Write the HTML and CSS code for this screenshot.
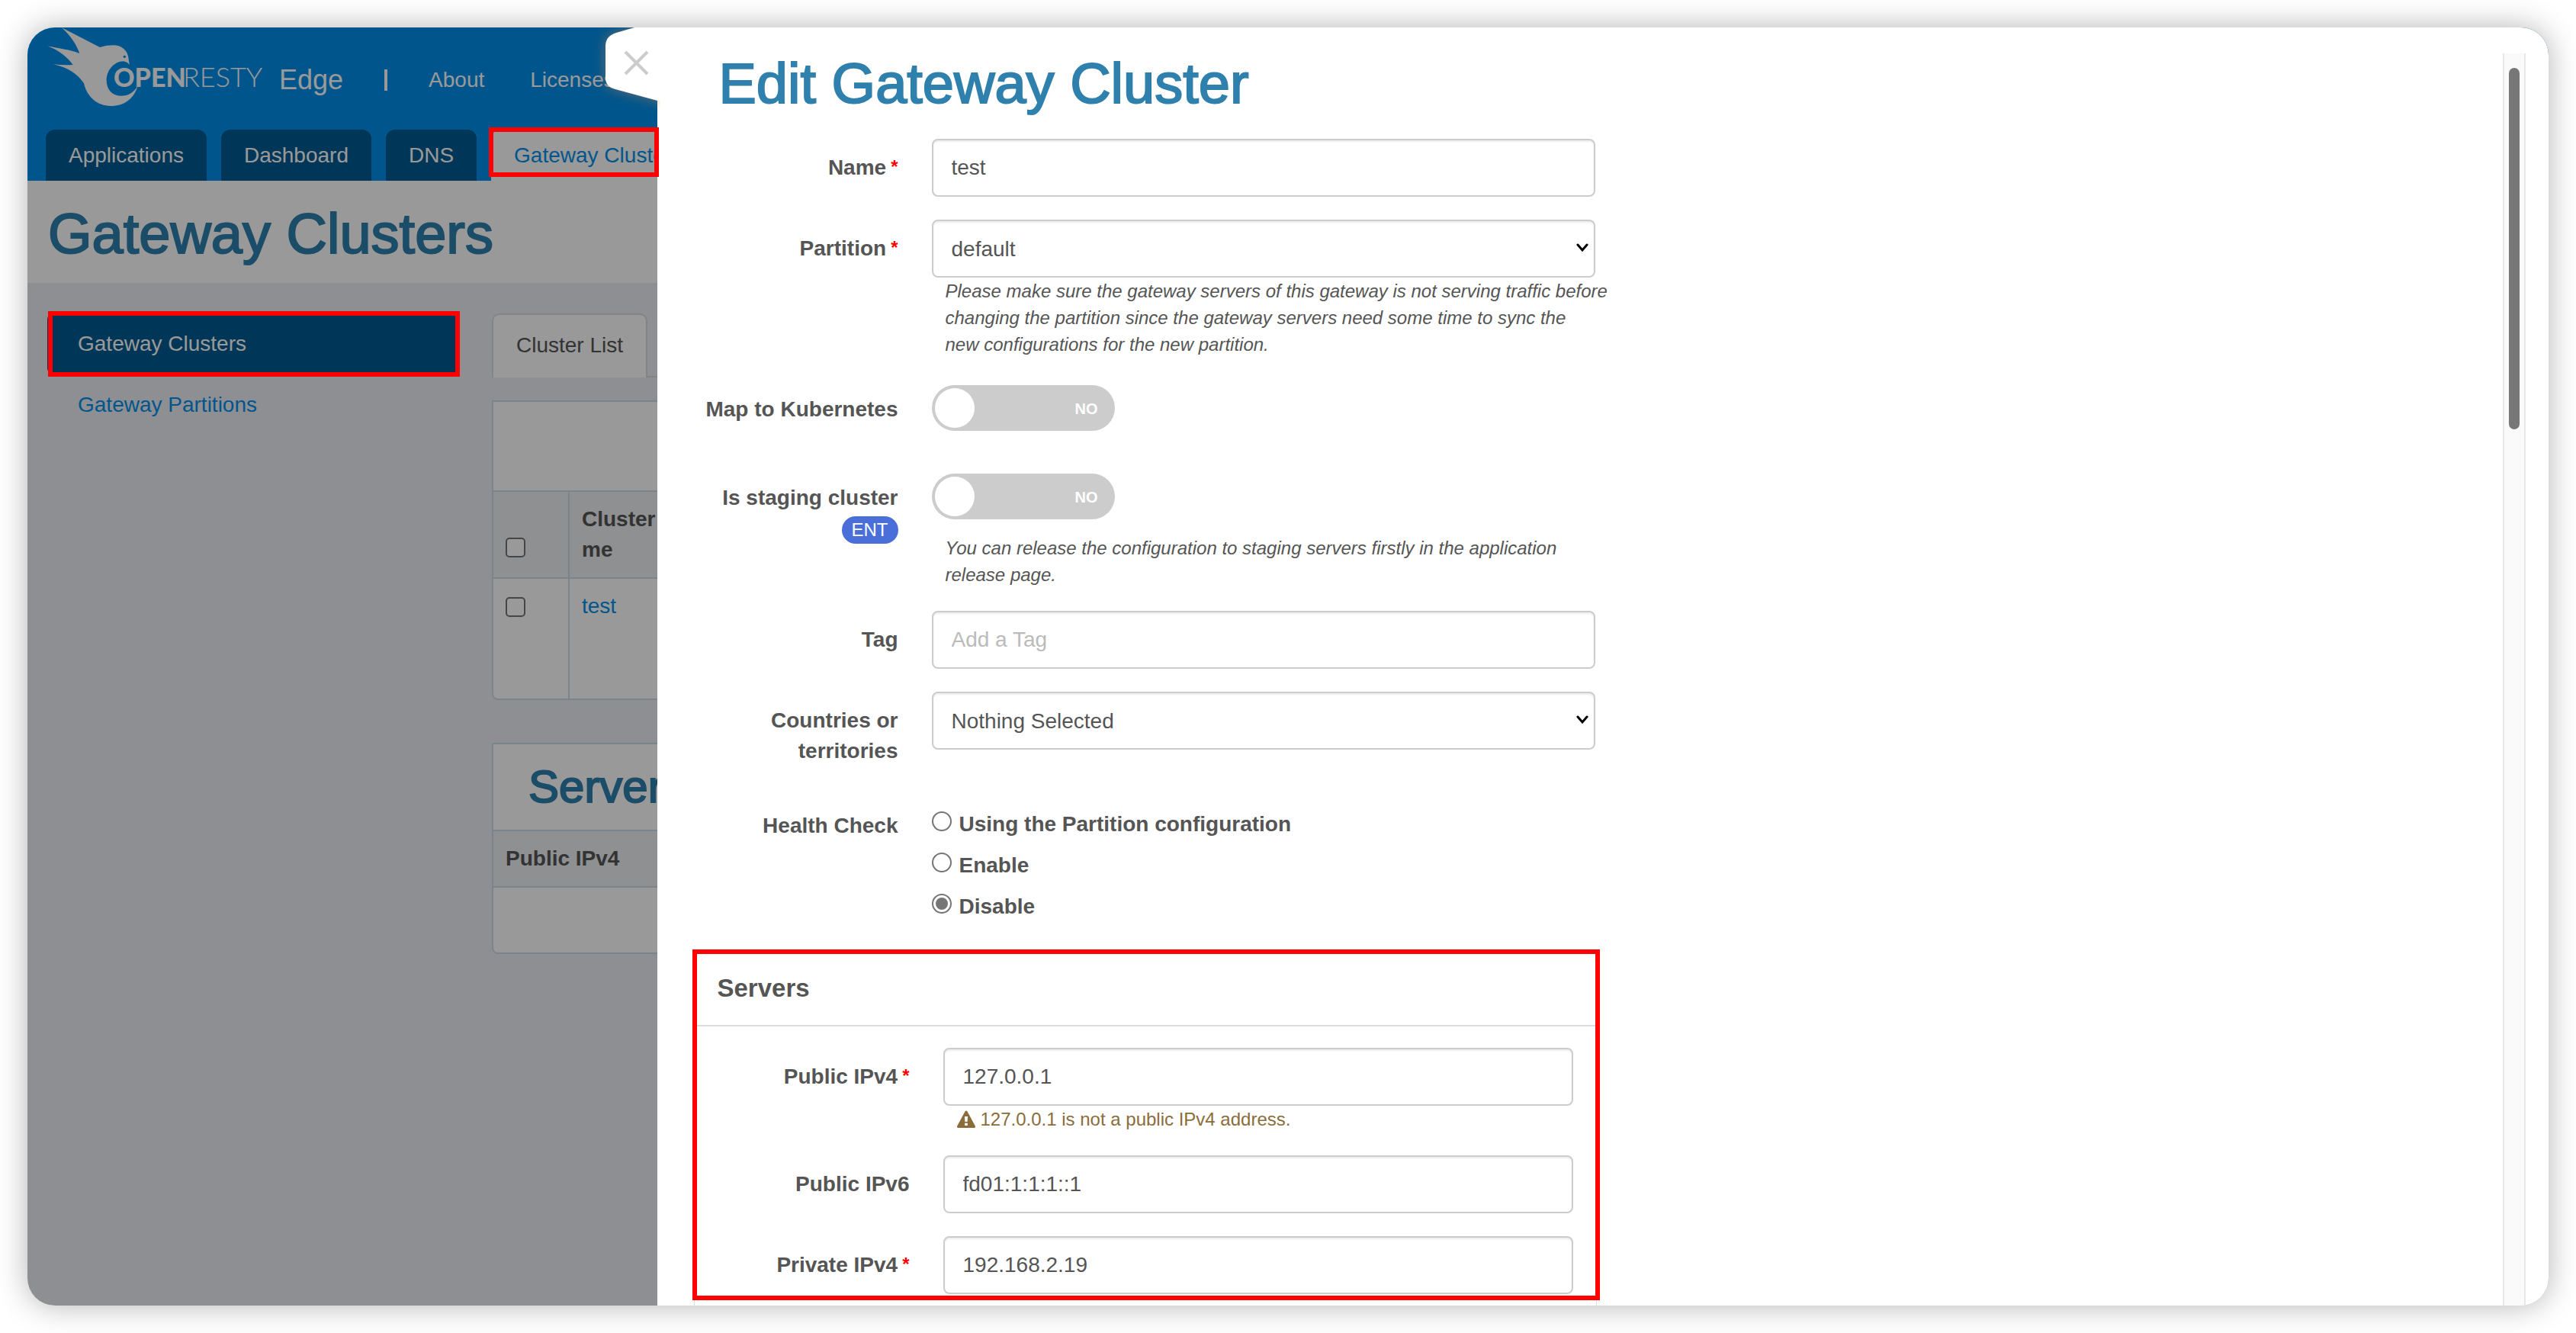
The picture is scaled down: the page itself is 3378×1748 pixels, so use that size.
FILE: index.html
```html
<!DOCTYPE html>
<html lang="en">
<head>
  <meta charset="UTF-8">
  <meta name="viewport" content="width=device-width, initial-scale=1">
  <title>OpenResty Edge - Gateway Clusters</title>
  <link rel="stylesheet" href="styles.css">
</head>
<body>
  <div class="window">
    <header class="header">
      <div class="header-top">
        <svg class="logo" width="330" height="126" viewBox="0 0 330 126" role="img" aria-label="OpenResty">
          <g transform="translate(14 -16) scale(.3333)">
            <path fill="#fff" d="M92 48C128 80 151 116 163 150C120 134 75 130 37 121C85 140 115 165 137 195C110 197 85 195 60 193C115 205 155 230 180 268C192 322 234 357 285 357C340 357 380 325 391 278C376 305 355 317 325 317C290 317 269 290 269 255C270 215 300 182 335 181C348 183 355 188 360 196C358 187 357 180 356 172C353 136 325 118 297 118C278 118 262 120 243 126Z"/>
            <circle cx="340" cy="163" r="5" fill="#0090e9"/>
          </g>
          <text class="logo-bold" x="113" y="78">OPEN</text>
          <text class="logo-light" x="204" y="78">RESTY</text>
        </svg>
        <span class="product">Edge</span>
        <span class="divider"></span>
        <a href="#">About</a>
        <a href="#">Licenses</a>
      </div>
      <nav class="tabs">
        <a href="#">Applications</a>
        <a href="#">Dashboard</a>
        <a href="#">DNS</a>
        <a href="#" class="active">Gateway Clusters<span class="mark mark-tab"></span></a>
      </nav>
    </header>

    <div class="page-title"><h1>Gateway Clusters</h1></div>

    <div class="page">
      <nav class="sidebar">
        <a href="#" class="active">Gateway Clusters<span class="mark mark-side"></span></a>
        <a href="#">Gateway Partitions</a>
      </nav>
      <main class="content">
        <div class="list-tabs"><a href="#">Cluster List</a></div>

        <div class="card">
          <div class="toolbar"></div>
          <table>
            <thead>
              <tr>
                <th class="check"><input type="checkbox" aria-label="Select all"></th>
                <th>Cluster Na<br>me</th>
              </tr>
            </thead>
            <tbody>
              <tr class="tall">
                <td class="check"><input type="checkbox" aria-label="Select test"></td>
                <td><a href="#">test</a></td>
              </tr>
            </tbody>
          </table>
        </div>

        <div class="card">
          <h2>Servers</h2>
          <table>
            <thead>
              <tr><th>Public IPv4</th></tr>
            </thead>
            <tbody>
              <tr class="empty"><td></td></tr>
            </tbody>
          </table>
        </div>
      </main>
    </div>

    <div class="overlay"></div>

    <section class="drawer">
      <button class="close" type="button" aria-label="Close">
        <svg width="68" height="98" viewBox="0 0 68 98">
          <path fill="#fff" d="M90 -15L14 7Q0 11 0 25V66Q0 78 13 81L90 102Z"/>
          <path stroke="#ccc" stroke-width="4" d="M26 32L55 61M55 32L26 61"/>
        </svg>
      </button>

      <form class="form">
        <h1>Edit Gateway Cluster</h1>

        <div class="row">
          <label for="name">Name<span class="req">*</span></label>
          <div class="field"><input type="text" id="name" value="test"></div>
        </div>

        <div class="row">
          <label for="partition">Partition<span class="req">*</span></label>
          <div class="field">
            <div class="select">
              <select id="partition"><option>default</option></select>
              <svg width="16" height="12" viewBox="0 0 16 12"><path d="M2 2L8 9L14 2" fill="none" stroke="#000" stroke-width="3" stroke-linecap="round"/></svg>
            </div>
            <p class="help">Please make sure the gateway servers of this gateway is not serving traffic before<br>changing the partition since the gateway servers need some time to sync the<br>new configurations for the new partition.</p>
          </div>
        </div>

        <div class="row">
          <label for="k8s">Map to Kubernetes</label>
          <div class="field">
            <div class="switch"><input type="checkbox" id="k8s"><span>NO</span></div>
          </div>
        </div>

        <div class="row">
          <label for="staging">Is staging cluster <span class="badge">ENT</span></label>
          <div class="field">
            <div class="switch"><input type="checkbox" id="staging"><span>NO</span></div>
            <p class="help">You can release the configuration to staging servers firstly in the application release page.</p>
          </div>
        </div>

        <div class="row">
          <label for="tag">Tag</label>
          <div class="field"><input type="text" id="tag" placeholder="Add a Tag"></div>
        </div>

        <div class="row">
          <label for="country">Countries or territories</label>
          <div class="field">
            <div class="select">
              <select id="country"><option>Nothing Selected</option></select>
              <svg width="16" height="12" viewBox="0 0 16 12"><path d="M2 2L8 9L14 2" fill="none" stroke="#000" stroke-width="3" stroke-linecap="round"/></svg>
            </div>
          </div>
        </div>

        <div class="row">
          <span class="label">Health Check</span>
          <div class="field radios">
            <label><input type="radio" name="health">Using the Partition configuration</label>
            <label><input type="radio" name="health">Enable</label>
            <label><input type="radio" name="health" checked>Disable</label>
          </div>
        </div>

        <div class="panel">
          <h3>Servers</h3>
          <div class="panel-body">
            <div class="row">
              <label for="ipv4">Public IPv4<span class="req">*</span></label>
              <div class="field">
                <input type="text" id="ipv4" value="127.0.0.1">
                <p class="warning">
                  <svg width="26" height="24" viewBox="0 0 26 24"><path fill="#8a6d3b" fill-rule="evenodd" d="M11.500 1.500Q13 -.5 14.500 1.500L24.800 20.500Q25.600 23 23.400 23H2.600Q.4 23 1.200 20.500ZM11 8L11.400 15H14.600L15 8ZM11.200 16.800V20H14.800V16.800Z"/></svg>
                  127.0.0.1 is not a public IPv4 address.
                </p>
              </div>
            </div>
            <div class="row">
              <label for="ipv6">Public IPv6</label>
              <div class="field"><input type="text" id="ipv6" value="fd01:1:1:1::1"></div>
            </div>
            <div class="row">
              <label for="private">Private IPv4<span class="req">*</span></label>
              <div class="field"><input type="text" id="private" value="192.168.2.19"></div>
            </div>
          </div>
          <span class="mark mark-panel"></span>
        </div>
      </form>

      <div class="scrollbar"><div class="thumb"></div></div>
    </section>
  </div>
</body>
</html>
```
FILE: styles.css
```css
* {
  box-sizing: border-box;
}
body {
  margin: 0;
  padding: 36px;
  background: #fff;
  font-family: "Liberation Sans", Arial, sans-serif;
  font-size: 28px;
  line-height: 40px;
  color: #555;
}
h1, h2, h3, p {
  margin: 0;
}
a {
  color: #0090e9;
  text-decoration: none;
}
.window {
  position: relative;
  height: calc(100vh - 72px);
  overflow: hidden;
  border-radius: 36px;
  background: #edeff5;
}
body::before {
  content: "";
  position: absolute;
  inset: 36px;
  border-radius: 36px;
  box-shadow: 0 0 40px rgba(0,0,0,0.3);
}

/* header */
.header {
  background: #0090e9;
}
.header-top {
  display: flex;
  align-items: center;
  height: 134px;
  padding-top: 4px;
}
.header-top a {
  color: #fff;
  margin-right: 60px;
}
.logo {
  align-self: flex-start;
  margin-top: -4px;
}
.logo text {
  fill: #fff;
  font-family: Lato, sans-serif;
}
.logo .logo-bold {
  font-size: 34px;
  font-weight: 900;
}
.logo .logo-light {
  font-size: 36px;
  font-weight: 300;
}
.product {
  color: #fff;
  font-size: 36px;
}
.divider {
  width: 4px;
  height: 28px;
  margin: 0 54px;
  background: #fff;
}
.tabs {
  display: flex;
  gap: 19px;
  padding-left: 24px;
}
.tabs a {
  position: relative;
  height: 67px;
  padding: 14px 30px;
  border-radius: 12px 12px 0 0;
  background: #005a91;
  color: #fff;
  white-space: nowrap;
}
.tabs .active {
  background: #fff;
  color: #0090e9;
}

/* page behind the drawer */
h1, h2 {
  color: #2f80ad;
  font-weight: 500;
  -webkit-text-stroke: 2px #2f80ad;
}
h1 {
  font-size: 74px;
  line-height: 80px;
}
.page-title {
  height: 134px;
  padding: 30px 27px;
  background: #fff;
}
.page {
  display: flex;
  gap: 43px;
  padding: 40px 26px;
}
.sidebar {
  width: 540px;
  flex-shrink: 0;
}
.sidebar a {
  display: block;
  position: relative;
  padding: 20px 40px;
}
.sidebar .active {
  background: #005a91;
  border-radius: 8px;
  color: #fff;
}
.content {
  flex: 1;
}
.list-tabs {
  display: flex;
  margin-bottom: 30px;
  border-bottom: 2px solid #ddd;
}
.list-tabs a {
  height: 84px;
  margin-bottom: -2px;
  padding: 20px 30px;
  border: 2px solid #ddd;
  border-bottom: 0;
  border-radius: 10px 10px 0 0;
  background: #fff;
  color: #555;
}
.card {
  margin-bottom: 56px;
  border: 2px solid #ccdce9;
  border-radius: 0 0 8px 8px;
  background: #fff;
}
.toolbar {
  height: 116px;
}
.card h2 {
  padding: 20px 46px;
  font-size: 60px;
  line-height: 72px;
}
table {
  width: 100%;
  border-collapse: collapse;
}
th, td {
  padding: 16px;
  border-top: 2px solid #ccdce9;
  text-align: left;
  vertical-align: top;
}
th {
  background: #edf0f2;
  vertical-align: bottom;
}
.check {
  width: 99px;
  border-right: 2px solid #ccdce9;
}
.check input {
  appearance: none;
  display: block;
  width: 26px;
  height: 26px;
  margin: 8px 0 10px;
  border: 2px solid #767676;
  border-radius: 5px;
  background: #fff;
}
.tall {
  height: 158px;
}
.empty {
  height: 86px;
}
.overlay {
  position: absolute;
  inset: 0;
  background: rgba(0,0,0,0.4);
}

/* drawer */
.drawer {
  position: absolute;
  top: 0;
  right: 0;
  bottom: 0;
  width: calc(75% + 1px);
  background: #fff;
}
.close {
  position: absolute;
  top: 0;
  left: -68px;
  width: 68px;
  height: 98px;
  padding: 0;
  border: 0;
  background: none;
  clip-path: inset(0 -4px -16px -16px);
  cursor: pointer;
}
.close svg {
  display: block;
  overflow: visible;
  filter: drop-shadow(0 0 8px rgba(255,140,70,0.4));
}
.form {
  max-width: 1262px;
  padding: 34px 0 0 46px;
}
.form h1 {
  margin: 0 0 32px 35px;
}
.row {
  display: grid;
  grid-template-columns: 270px 1fr;
  column-gap: 44px;
  margin-bottom: 30px;
}
.row > label, .label {
  margin: 18px 0 10px;
  font-weight: bold;
  text-align: right;
}
.req {
  margin-left: 6px;
  color: #f00;
  font-size: 24px;
  line-height: 24px;
  vertical-align: 2px;
}
.badge {
  display: inline-block;
  margin-top: 4px;
  padding: 0 13px;
  border-radius: 18px;
  background: #4a6fd8;
  color: #fff;
  font-size: 24px;
  font-weight: normal;
  line-height: 36px;
}
input[type="text"], select {
  display: block;
  width: 100%;
  max-width: 870px;
  height: 76px;
  padding: 0 24px;
  border: 2px solid #ccc;
  border-radius: 8px;
  background: #fff;
  box-shadow: inset 0 2px 2px rgba(0,0,0,0.075);
  color: #555;
  font-family: inherit;
  font-size: 28px;
}
select {
  appearance: none;
}
::placeholder {
  color: #bbb;
}
.select {
  position: relative;
  max-width: 870px;
}
.select svg {
  position: absolute;
  right: 9px;
  top: 31px;
  pointer-events: none;
}
.help {
  padding-left: 18px;
  font-size: 24px;
  font-style: italic;
  line-height: 35px;
}
.switch {
  position: relative;
  width: 240px;
  height: 60px;
  margin: 6px 0 20px;
}
.switch input {
  appearance: none;
  display: block;
  width: 240px;
  height: 60px;
  margin: 0;
  border-radius: 30px;
  background: #ccc;
}
.switch input::before {
  content: "";
  display: block;
  width: 52px;
  height: 52px;
  margin: 4px;
  position: absolute;
  border-radius: 50%;
  background: #fff;
}
.switch span {
  position: absolute;
  right: 22px;
  top: 11px;
  color: #fff;
  font-size: 20px;
  font-weight: bold;
}
.radios {
  display: flex;
  flex-direction: column;
  gap: 14px;
  padding-top: 16px;
}
.radios label {
  display: flex;
  gap: 10px;
  font-weight: bold;
}
input[type="radio"] {
  appearance: none;
  width: 26px;
  height: 26px;
  margin: 3px 0 0;
  border: 2px solid #767676;
  border-radius: 50%;
}
input[type="radio"]:checked {
  background: #767676;
  background-clip: content-box;
  padding: 3px;
}
.panel {
  position: relative;
  width: 1184px;
  margin: 38px 0 0 2px;
  border: 1px solid #ddd;
}
.panel h3 {
  padding: 28px 30px;
  border-bottom: 2px solid #ddd;
  font-size: 33px;
}
.panel-body {
  padding: 28px 30px 0 12px;
}
.warning {
  display: flex;
  align-items: center;
  gap: 6px;
  padding-left: 17px;
  color: #8a6d3b;
  font-size: 24px;
  line-height: 35px;
}
.scrollbar {
  position: absolute;
  top: 34px;
  right: 30px;
  bottom: 0;
  width: 30px;
  padding: 19px 6px;
  border: solid #e8e8e8;
  border-width: 0 2px;
  background: #fafafa;
}
.thumb {
  height: 474px;
  border-radius: 7px;
  background: #777;
}

/* red highlight boxes */
.mark {
  position: absolute;
  z-index: 10;
  border: 6px solid #f00;
  pointer-events: none;
}
.mark-tab {
  top: -3px;
  left: -3px;
  width: 223px;
  height: 65px;
}
.mark-side {
  inset: -3px -1px -3px 1px;
}
.mark-panel {
  top: -3px;
  left: -3px;
  right: -5px;
  height: 460px;
}
```
